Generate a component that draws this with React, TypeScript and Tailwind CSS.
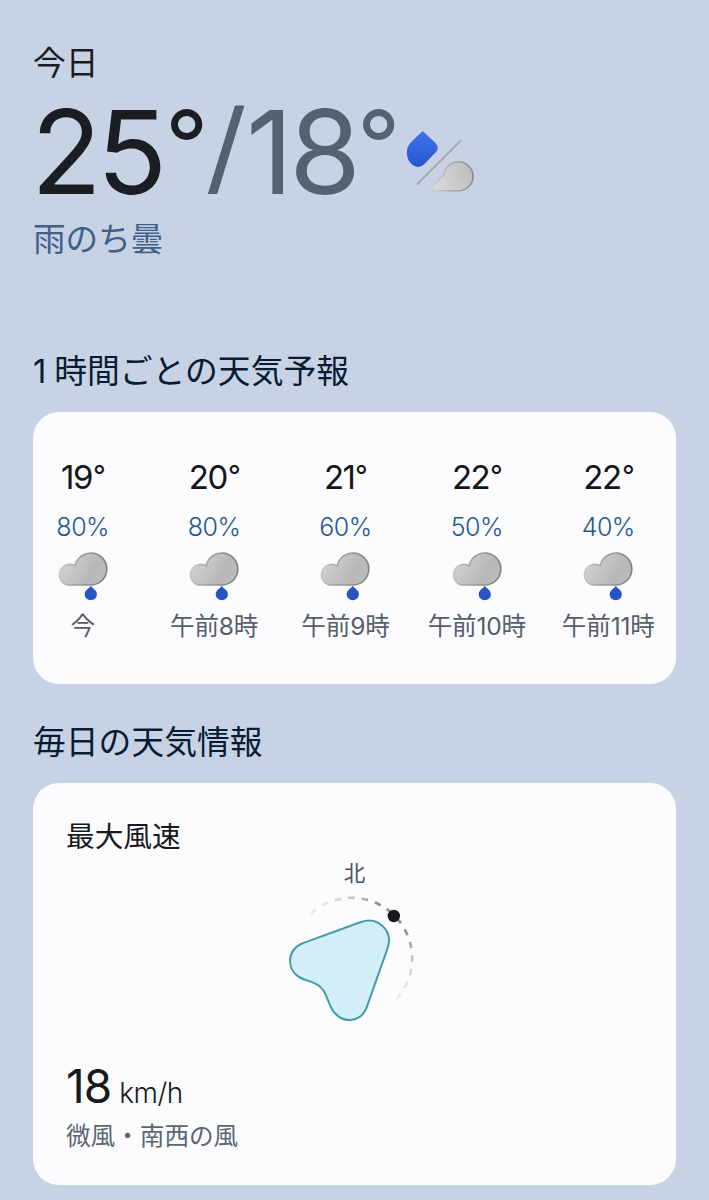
import React from "react";

interface Hour {
  temp: string;
  rain: string;
  label: string;
}

const hours: Hour[] = [
  { temp: "19", rain: "80%", label: "今" },
  { temp: "20", rain: "80%", label: "午前8時" },
  { temp: "21", rain: "60%", label: "午前9時" },
  { temp: "22", rain: "50%", label: "午前10時" },
  { temp: "22", rain: "40%", label: "午前11時" },
];

function RainToCloudIcon() {
  return (
    <svg width="80" height="72" viewBox="0 4 80 72" fill="none">
      <defs>
        <linearGradient id="dropFill" x1="0" y1="0" x2="0" y2="1">
          <stop offset="0" stopColor="#4076e8" />
          <stop offset="1" stopColor="#2555cf" />
        </linearGradient>
        <linearGradient id="smallCloud" x1="0" y1="0.7" x2="1" y2="0.3">
          <stop offset="0" stopColor="#dadada" />
          <stop offset="1" stopColor="#bdbdbb" />
        </linearGradient>
        <linearGradient id="smallEdge" x1="0" y1="0.5" x2="1" y2="0.5">
          <stop offset="0" stopColor="#cfcfd1" />
          <stop offset="1" stopColor="#858587" />
        </linearGradient>
      </defs>
      <path
        d="M22.6 11 L34.8 22.3 Q40 27.6 36 32 L24.5 44 Q19.5 49 13.5 45.5 Q6.8 41.5 6.8 32 Q7 25.5 13 20.3 Z"
        fill="url(#dropFill)"
      />
      <path d="M16.8 64.5 L61 20.3" stroke="#a9a9ac" strokeWidth="2" />
      <path
        d="M35.5 70.8 Q30.6 70.1 33 66.2 Q34.5 63.5 39.6 59.4 Q40.8 55.6 44 55.8 A14.5 14.5 0 1 1 59.4 70.8 Z"
        fill="url(#smallCloud)"
        stroke="url(#smallEdge)"
        strokeWidth="1.5"
      />
    </svg>
  );
}

function RainIcon() {
  return (
    <svg width="64" height="64" viewBox="0.5 0 64 64" fill="none">
      <defs>
        <linearGradient id="cloudFill" x1="0" y1="0.3" x2="1" y2="0.7">
          <stop offset="0" stopColor="#d3d3d3" />
          <stop offset="0.7" stopColor="#b8b8b8" />
          <stop offset="1" stopColor="#bcbcbc" />
        </linearGradient>
        <linearGradient id="cloudEdge" x1="0" y1="0.4" x2="1" y2="0.6">
          <stop offset="0" stopColor="#cccccc" />
          <stop offset="0.4" stopColor="#a0a0a0" />
          <stop offset="1" stopColor="#808082" />
        </linearGradient>
      </defs>
      <path
        d="M19.6 43 A10.3 10.3 0 1 1 24.6 23.9 A16 16 0 1 1 40.2 43 Z"
        fill="url(#cloudFill)"
        stroke="url(#cloudEdge)"
        strokeWidth="1.6"
      />
      <path
        d="M40.3 43.8 C41.8 46.6 46.4 48 46.4 52.2 A6.1 6.1 0 0 1 34.2 52.2 C34.2 48 38.8 46.6 40.3 43.8 Z"
        fill="#2454c6"
      />
    </svg>
  );
}

function WindCompass() {
  return (
    <svg width="160" height="140" viewBox="0 39 160 140" fill="none">
      <defs>
        <linearGradient id="arcFade" gradientUnits="userSpaceOnUse" x1="40" y1="64" x2="127" y2="149">
          <stop offset="0" stopColor="#8c8c90" stopOpacity="0.15" />
          <stop offset="0.35" stopColor="#8c8c90" />
          <stop offset="0.65" stopColor="#8c8c90" />
          <stop offset="1" stopColor="#8c8c90" stopOpacity="0.15" />
        </linearGradient>
      </defs>
      <path
        d="M41 63.2 A60.7 60.7 0 0 1 81.5 47.8 A60.7 60.7 0 0 1 142.2 108.5 A60.7 60.7 0 0 1 126.8 149"
        stroke="url(#arcFade)"
        strokeWidth="2.6"
        strokeDasharray="6.6 7.02"
      />
      <circle cx="123.8" cy="66" r="6.2" fill="#17181b" />
      <g transform="scale(0.33333)">
        <path
          d="M273 216 L97 280 C50 298 45 365 99 387 L128 397 Q156 407 167 434 L182 470 C205 522 270 525 290 472 L353 294 C370 243 325 198 273 216 Z"
          fill="#d2eff8"
          stroke="#459aa8"
          strokeWidth="6"
        />
      </g>
    </svg>
  );
}

function HourColumn({ hour }: { hour: Hour }) {
  return (
    <div className="flex w-[131.4px] flex-col items-center whitespace-nowrap">
      <div className="ml-[2px] flex h-10 text-[33px] leading-10 tracking-[-1.5px] text-[#151619]">
        <span>{hour.temp}</span>
        <span className="ml-px origin-[0_9px] scale-[0.85]">°</span>
      </div>
      <div className="mt-[15px] h-[30px] text-[25px] leading-[30px] font-light tracking-[-0.5px] text-[#1f5a90]">
        {hour.rain}
      </div>
      <RainIcon />
      <div className="h-9 text-[24.6px] leading-10 tracking-[-0.2px] text-[#565e6b]">{hour.label}</div>
    </div>
  );
}

export default function App() {
  return (
    <main className="h-[1200px] w-[709px] overflow-hidden bg-[#c7d3e4] px-[33px] pt-[37px] font-['Inter','Noto_Sans_CJK_JP',sans-serif]">
      {/* Today */}
      <div className="h-12 text-[32.8px] leading-[52px] text-[#191c20]">今日</div>
      <div className="flex h-[134px] text-[116px] leading-[134px] tracking-[-4px] whitespace-nowrap">
        <div className="-ml-0.5 flex text-[#1a1e22]">
          <span>2</span>
          <span className="-ml-px">5</span>
          <span className="ml-[2px] origin-[0_23px] scale-[0.82]">°</span>
        </div>
        <div className="-ml-[9px] flex text-[#54616f]">
          <span className="origin-[50%_20px] scale-y-[0.875]">/</span>
          <span className="ml-[3px]">1</span>
          <span>8</span>
          <span className="origin-[0_23px] scale-[0.82]">°</span>
        </div>
        <div className="mt-[39px] -ml-1.5 shrink-0">
          <RainToCloudIcon />
        </div>
      </div>
      <div className="h-9 text-[32.6px] leading-10 text-[#3f6089]">雨のち曇</div>

      {/* Hourly */}
      <h2 className="mt-24 h-9 text-[32.8px] leading-10 text-[#071b33]">
        <span className="tracking-[-0.7px]">1 </span>時間ごとの天気予報
      </h2>
      <section className="mt-[25px] h-[272px] rounded-[26px] bg-[#fcfcff] pt-[45px]">
        <div className="-ml-4 flex">
          {hours.map((hour) => (
            <HourColumn key={hour.label} hour={hour} />
          ))}
        </div>
      </section>

      {/* Daily */}
      <h2 className="mt-[38px] h-9 text-[32.8px] leading-10 text-[#071b33]">毎日の天気情報</h2>
      <section className="mt-[25px] h-[402px] rounded-[26px] bg-[#fcfcff] px-[33px] pt-8">
        <h3 className="h-10 text-[28.7px] leading-[44px] text-[#191a1d]">最大風速</h3>
        <div className="h-[34px] text-center text-[21.5px] leading-[36px] text-[#4b5260]">北</div>
        <div className="ml-[204px]">
          <WindCompass />
        </div>
        <div className="mt-[29px] flex h-14 items-baseline leading-[56px] text-[#191a1d]">
          <span className="text-[46px] tracking-[-1px]">18</span>
          <span className="ml-2 text-[28px] font-light tracking-[-0.5px]">km/h</span>
        </div>
        <div className="h-10 text-[24.6px] leading-[44px] text-[#5a6672]">微風・南西の風</div>
      </section>
    </main>
  );
}
